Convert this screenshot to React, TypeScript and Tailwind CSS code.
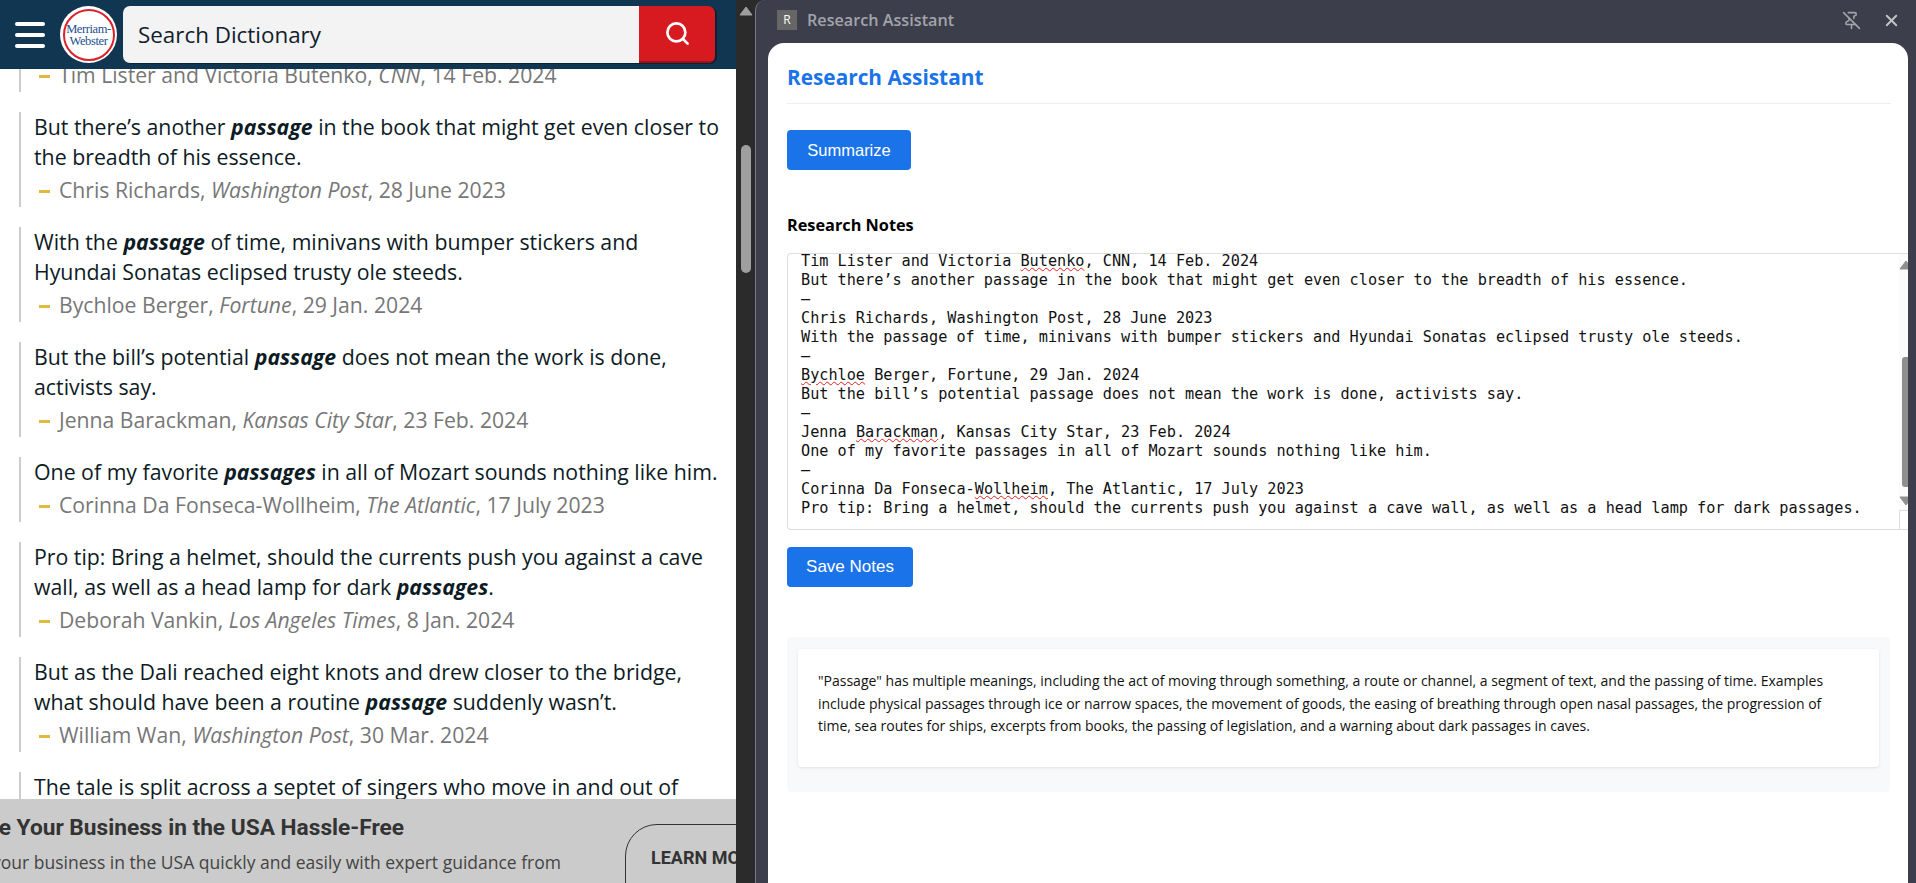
import { PinOff, Search, X } from 'lucide-react';

const quotes = [
  {
    text: (
      <>
        But there’s another <b className="italic font-bold">passage</b> in the book that might get even closer to the breadth of his essence.
      </>
    ),
    by: 'Chris Richards',
    pub: 'Washington Post',
    date: '28 June 2023',
  },
  {
    text: (
      <>
        With the <b className="italic font-bold">passage</b> of time, minivans with bumper stickers and Hyundai Sonatas eclipsed trusty ole steeds.
      </>
    ),
    by: 'Bychloe Berger',
    pub: 'Fortune',
    date: '29 Jan. 2024',
  },
  {
    text: (
      <>
        But the bill’s potential <b className="italic font-bold">passage</b> does not mean the work is done, activists say.
      </>
    ),
    by: 'Jenna Barackman',
    pub: 'Kansas City Star',
    date: '23 Feb. 2024',
  },
  {
    text: (
      <>
        One of my favorite <b className="italic font-bold">passages</b> in all of Mozart sounds nothing like him.
      </>
    ),
    by: 'Corinna Da Fonseca-Wollheim',
    pub: 'The Atlantic',
    date: '17 July 2023',
  },
  {
    text: (
      <>
        Pro tip: Bring a helmet, should the currents push you against a cave wall, as well as a head lamp for dark <b className="italic font-bold">passages</b>.
      </>
    ),
    by: 'Deborah Vankin',
    pub: 'Los Angeles Times',
    date: '8 Jan. 2024',
  },
  {
    text: (
      <>
        But as the Dali reached eight knots and drew closer to the bridge, what should have been a routine <b className="italic font-bold">passage</b> suddenly wasn’t.
      </>
    ),
    by: 'William Wan',
    pub: 'Washington Post',
    date: '30 Mar. 2024',
  },
];

const Typo = ({ children }: { children: string }) => (
  <span className="underline decoration-wavy decoration-[#e02020] decoration-1 underline-offset-1">{children}</span>
);

const Byline = ({ by, pub, date }: { by: string; pub: string; date: string }) => (
  <p className="flex h-[35px] items-center whitespace-pre text-[21.2px] leading-[30px] text-[#777777]">
    <span className="ml-[5px] mr-[9px] mt-[3px] h-[3px] w-[11px] shrink-0 bg-[#e0b93e]" />
    <span>
      {by}, <i>{pub}</i>, {date}
    </span>
  </p>
);

const Arrow = ({ down }: { down?: boolean }) => (
  <svg width="14" height="10" viewBox="0 0 14 10" className={down ? 'rotate-180' : ''}>
    <path d="M7 1 L13 9 L1 9 Z" fill="currentColor" stroke="currentColor" strokeLinejoin="round" />
  </svg>
);

const DictionaryPane = () => (
  <div className="flex h-full w-[736px] shrink-0 flex-col overflow-hidden bg-white font-['Open_Sans',sans-serif]">
    {/* Site header */}
    <header className="relative z-10 flex h-[69px] shrink-0 items-center bg-[#113651] pl-[15px]">
      <div className="flex w-[30px] flex-col gap-[7px]">
        <span className="h-[4px] rounded-full bg-white" />
        <span className="h-[4px] rounded-full bg-white" />
        <span className="h-[4px] rounded-full bg-white" />
      </div>
      <div className="ml-[15px] flex size-[57px] items-center justify-center rounded-full bg-white">
        <div className="flex size-[52px] flex-col items-center justify-center rounded-full border-2 border-[#d8232a] font-['Liberation_Serif',serif] text-[12.5px] leading-[12px] tracking-[-0.4px] text-[#1c4f91]">
          <span>Merriam-</span>
          <span>Webster</span>
        </div>
      </div>
      <div className="ml-[6px] flex h-[57px] w-[592px] overflow-hidden rounded-[7px] shadow-[2px_1px_0_#0b2233]">
        <div className="flex flex-1 items-center bg-[#f3f3f3] pl-[15px] text-[22.4px] text-[#10202c]">Search Dictionary</div>
        <div className="flex w-[76px] items-center justify-center border-b-2 border-[#9e1217] bg-[#d71920]">
          <Search size={27} strokeWidth={2.4} className="text-white" />
        </div>
      </div>
    </header>

    {/* Example sentences */}
    <div className="min-h-0 flex-1 overflow-hidden pl-[19px]">
      <div className="-mt-[12px] flex flex-col gap-[20px]">
        <div className="border-l-2 border-[#cccccc] pl-[13px]">
          <Byline by="Tim Lister and Victoria Butenko" pub="CNN" date="14 Feb. 2024" />
        </div>
        {quotes.map((q) => (
          <div key={q.by} className="border-l-2 border-[#cccccc] pl-[13px]">
            <p className="w-[686px] text-[21.3px] leading-[30px] text-[#0d1b25]">{q.text}</p>
            <Byline by={q.by} pub={q.pub} date={q.date} />
          </div>
        ))}
        <div className="border-l-2 border-[#cccccc] pl-[13px]">
          <p className="w-[686px] text-[21.3px] leading-[30px] text-[#0d1b25]">
            The tale is split across a septet of singers who move in and out of
          </p>
        </div>
      </div>
    </div>

    {/* Ad banner */}
    <div className="flex h-[84px] shrink-0 overflow-hidden bg-[#cbcbcb]">
      <div className="flex w-[561px] shrink-0 flex-col pt-[15px]">
        <div className="mr-[157px] flex justify-end whitespace-nowrap font-['Roboto',sans-serif] text-[22.7px] font-bold leading-[28px] text-[#333333]">
          Incorporate Your Business in the USA Hassle-Free
        </div>
        <div className="mt-[8px] flex justify-end whitespace-nowrap text-[17.5px] leading-[24px] text-[#444444]">
          Incorporate your business in the USA quickly and easily with expert guidance from
        </div>
      </div>
      <div className="ml-[64px] mt-[25px] flex h-[90px] w-[200px] shrink-0 items-start rounded-[32px] border border-[#333333] pl-[25px] pt-[19px] font-['Roboto',sans-serif] text-[18px] font-bold text-[#333333]">
        LEARN MORE
      </div>
    </div>
  </div>
);

const PageScrollbar = () => (
  <div className="relative flex h-full w-[19px] shrink-0 flex-col items-center bg-[#2b2b2b] pt-[6px] text-[#9f9f9f]">
    <Arrow />
    <div className="mt-[129px] h-[128px] w-[10px] rounded-full bg-[#9f9f9f]" />
  </div>
);

const Notes = () => (
  <div className="-mt-[2px] whitespace-pre pl-[13px] font-['DejaVu_Sans_Mono',monospace] text-[15.2px] leading-[19px] text-[#111111]">
    <div>
      Tim Lister and Victoria <Typo>Butenko</Typo>, CNN, 14 Feb. 2024
    </div>
    <div>But there’s another passage in the book that might get even closer to the breadth of his essence.</div>
    <div>—</div>
    <div>Chris Richards, Washington Post, 28 June 2023</div>
    <div>With the passage of time, minivans with bumper stickers and Hyundai Sonatas eclipsed trusty ole steeds.</div>
    <div>—</div>
    <div>
      <Typo>Bychloe</Typo> Berger, Fortune, 29 Jan. 2024
    </div>
    <div>But the bill’s potential passage does not mean the work is done, activists say.</div>
    <div>—</div>
    <div>
      Jenna <Typo>Barackman</Typo>, Kansas City Star, 23 Feb. 2024
    </div>
    <div>One of my favorite passages in all of Mozart sounds nothing like him.</div>
    <div>—</div>
    <div>
      Corinna Da Fonseca-<Typo>Wollheim</Typo>, The Atlantic, 17 July 2023
    </div>
    <div>Pro tip: Bring a helmet, should the currents push you against a cave wall, as well as a head lamp for dark passages.</div>
  </div>
);

const AssistantPane = () => (
  <div className="flex h-full min-w-0 flex-1 flex-col rounded-tl-[10px] border-l border-[#777985] bg-[#3c3e4b]">
    <div className="flex h-[43px] shrink-0 items-center pb-[3px] pl-[21px] pr-[15px]">
      <div className="flex size-[20px] items-center justify-center bg-[#666666] font-['Open_Sans',sans-serif] text-[12px] text-white">R</div>
      <span className="ml-[10px] font-['Open_Sans',sans-serif] text-[16.2px] font-semibold text-[#a3a4ab]">Research Assistant</span>
      <PinOff size={19} className="ml-auto text-[#a3a4ab]" />
      <X size={19} strokeWidth={2.4} className="ml-[21px] text-[#c4c5ca]" />
    </div>
    <div className="ml-[12px] mr-[8px] min-h-0 flex-1 overflow-hidden rounded-t-[16px] bg-white pl-[19px]">
      <div className="mr-[17px] border-b border-[#eeeeee] pb-[12px] pt-[21px]">
        <h1 className="font-['Open_Sans',sans-serif] text-[20.8px] font-bold leading-[27px] text-[#1a73e8]">Research Assistant</h1>
      </div>
      <button className="mt-[26px] block h-[40px] w-[124px] rounded-[4px] bg-[#1a73e8] font-['Liberation_Sans',sans-serif] text-[16.5px] text-white">Summarize</button>
      <h2 className="mt-[44px] font-['Open_Sans',sans-serif] text-[16.3px] font-bold leading-[22px] text-black">Research Notes</h2>
      <div className="relative mt-[17px] h-[277px] overflow-hidden rounded-l-[4px] border-y border-l border-[#dddddd]">
        <Notes />
        <div className="absolute bottom-0 right-0 top-0 flex w-[9px] flex-col items-end bg-[#fbfbfb] text-[#8f8f8f]">
          <div className="mt-[6px] h-[10px] w-[9px] overflow-hidden">
            <Arrow />
          </div>
          <div className="mt-[87px] h-[130px] w-[6px] rounded-l-[3px] bg-[#8f8f8f]" />
          <div className="mt-[9px] h-[10px] w-[9px] overflow-hidden">
            <Arrow down />
          </div>
          <div className="mt-[4px] h-[19px] w-[9px] border-l border-t border-[#dddddd] bg-white" />
        </div>
      </div>
      <button className="mt-[17px] block h-[40px] w-[126px] rounded-[4px] bg-[#1a73e8] font-['Liberation_Sans',sans-serif] text-[17px] text-white">Save Notes</button>
      <div className="mr-[18px] mt-[50px] rounded-[4px] bg-[#f8f9fa] px-[11px] pb-[25px] pt-[12px]">
        <div className="h-[118px] rounded-[4px] bg-white pl-[20px] pr-[30px] pt-[21px] font-['Open_Sans',sans-serif] text-[14px] leading-[22.5px] text-[#111111] shadow-[0_1px_3px_rgba(0,0,0,0.1)]">
          "Passage" has multiple meanings, including the act of moving through something, a route or channel, a segment of text, and the passing of time. Examples include physical passages through ice or narrow spaces, the movement of goods, the easing of breathing through open nasal passages, the progression of time, sea routes for ships, excerpts from books, the passing of legislation, and a warning about dark passages in caves.
        </div>
      </div>
    </div>
  </div>
);

export default function App() {
  return (
    <div className="flex h-[883px] w-[1916px] overflow-hidden bg-[#2b2b2b]">
      <DictionaryPane />
      <PageScrollbar />
      <AssistantPane />
    </div>
  );
}
